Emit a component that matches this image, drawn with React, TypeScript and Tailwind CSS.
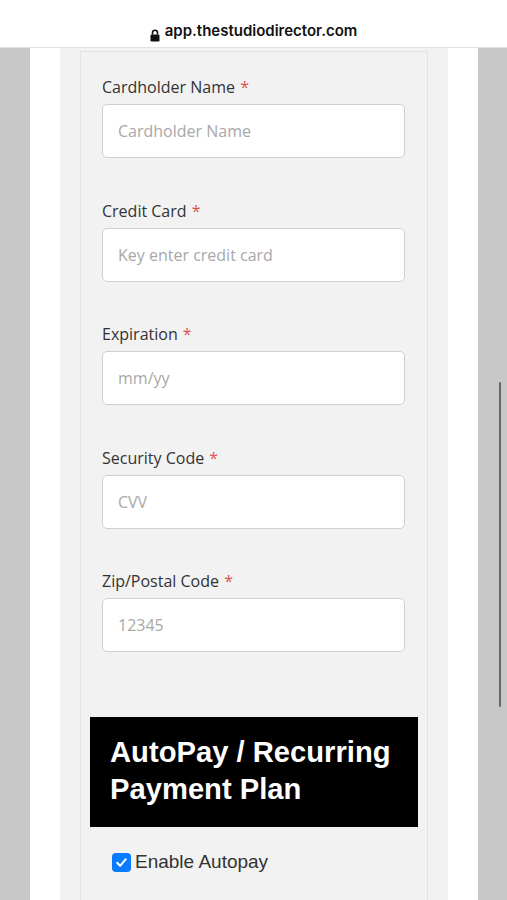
const FIELDS = [
  { label: 'Cardholder Name', placeholder: 'Cardholder Name' },
  { label: 'Credit Card', placeholder: 'Key enter credit card' },
  { label: 'Expiration', placeholder: 'mm/yy' },
  { label: 'Security Code', placeholder: 'CVV' },
  { label: 'Zip/Postal Code', placeholder: '12345' },
];

function LockIcon() {
  return (
    <svg width="10" height="13" viewBox="0 0 10 13" className="mr-[5px]">
      <path d="M2.5 5.5V3.8a2.5 2.5 0 0 1 5 0v1.7" fill="none" stroke="#111" strokeWidth="1.6" />
      <rect x="0.5" y="5.5" width="9" height="7" rx="1.2" fill="#111" />
    </svg>
  );
}

export default function App() {
  return (
    <div className="relative h-[900px] w-full overflow-hidden bg-[#c8c8c8] font-['Open_Sans',sans-serif]">
      <div className="flex h-[48px] items-end justify-center border-b border-[#e2e2e2] bg-white pb-[5px]">
        <LockIcon />
        <span className="text-[15px] font-semibold text-[#111] font-['Inter',sans-serif]">app.thestudiodirector.com</span>
      </div>

      <div className="flex">
        <div className="w-[30px] shrink-0" />
        <div className="w-[448px] shrink-0 bg-white px-[30px]">
          <div className="bg-[#f2f2f2] px-[20px] pt-[3px]">
            <div className="border-x border-t border-[#e3e3e3] pb-[40px]">
              <div className="px-[21px] pt-[23px]">
                {FIELDS.map((f, i) => (
                  <div key={f.label} className={i < FIELDS.length - 1 ? 'mb-[40.5px]' : ''}>
                    <div className="mb-[5px] h-[24px] text-[16px] leading-[24px] text-[#333]">
                      {f.label} <span className="ml-[1px] text-[#d9534f]">*</span>
                    </div>
                    <div className="flex h-[54px] w-[303px] items-center rounded-[5px] border border-[#cfcfcf] bg-white px-[15px] text-[16px] text-[#a8a8a8]">
                      {f.placeholder}
                    </div>
                  </div>
                ))}
              </div>

              <div className="mx-[9px] mt-[65px] h-[110px] bg-black px-[20px] pt-[17px] font-['Liberation_Sans',Arial,sans-serif] text-[29.2px] font-bold leading-[37px] text-white">
                AutoPay / Recurring
                <br />
                Payment Plan
              </div>

              <div className="mt-[21px] flex items-center pl-[31px] font-['Liberation_Sans',Arial,sans-serif]">
                <span className="flex h-[19px] w-[19px] items-center justify-center rounded-[4px] bg-[#0a7bff]">
                  <svg width="13" height="13" viewBox="0 0 13 13">
                    <path d="M2.2 6.8l2.9 3 5.7-6.6" fill="none" stroke="white" strokeWidth="2" strokeLinecap="round" strokeLinejoin="round" />
                  </svg>
                </span>
                <span className="ml-[4px] text-[19px] text-[#333]">Enable Autopay</span>
              </div>
            </div>
          </div>
        </div>
        <div className="relative w-[29px] shrink-0">
          <div className="absolute left-[21px] top-[334px] h-[325px] w-[2px] rounded-full bg-[#666]" />
        </div>
      </div>
    </div>
  );
}
